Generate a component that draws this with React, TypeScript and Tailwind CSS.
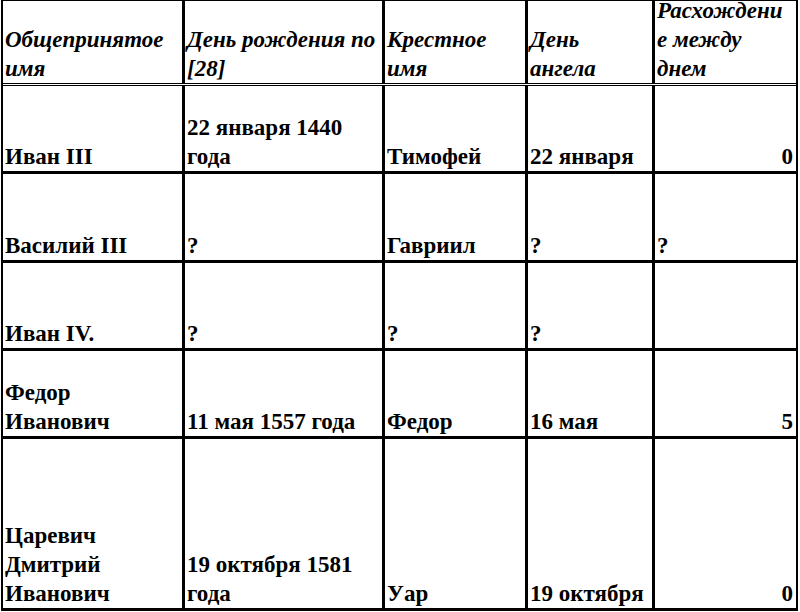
import React from "react";

type Cell = { lines: string[]; align?: "left" | "right" };

const header: string[][] = [
  ["Общепринятое", "имя"],
  ["День рождения по", "[28]"],
  ["Крестное", "имя"],
  ["День", "ангела"],
  ["Расхождени", "е между", "днем"],
];

const rows: { height: string; cells: Cell[] }[] = [
  {
    height: "h-[88px]",
    cells: [
      { lines: ["Иван III"] },
      { lines: ["22 января 1440", "года"] },
      { lines: ["Тимофей"] },
      { lines: ["22 января"] },
      { lines: ["0"], align: "right" },
    ],
  },
  {
    height: "h-[89px]",
    cells: [
      { lines: ["Василий III"] },
      { lines: ["?"] },
      { lines: ["Гавриил"] },
      { lines: ["?"] },
      { lines: ["?"] },
    ],
  },
  {
    height: "h-[88px]",
    cells: [
      { lines: ["Иван IV."] },
      { lines: ["?"] },
      { lines: ["?"] },
      { lines: ["?"] },
      { lines: [] },
    ],
  },
  {
    height: "h-[88px]",
    cells: [
      { lines: ["Федор", "Иванович"] },
      { lines: ["11 мая 1557 года"] },
      { lines: ["Федор"] },
      { lines: ["16 мая"] },
      { lines: ["5"], align: "right" },
    ],
  },
  {
    height: "h-[172px]",
    cells: [
      { lines: ["Царевич", "Дмитрий", "Иванович"] },
      { lines: ["19 октября 1581", "года"] },
      { lines: ["Уар"] },
      { lines: ["19 октября"] },
      { lines: ["0"], align: "right" },
    ],
  },
];

function Lines({ lines }: { lines: string[] }) {
  return (
    <>
      {lines.map((l, i) => (
        <span key={i} className="block whitespace-nowrap">
          {l}
        </span>
      ))}
    </>
  );
}

export default function App() {
  return (
    <div className="h-[612px] w-[800px] overflow-hidden bg-white pl-[1px] font-['Liberation_Serif',serif] text-[23px] leading-[29px] font-bold text-black">
      <div className="w-[797px] border-t border-r-2 border-l-2 border-black">
        {/* header */}
        <div className="grid h-[85px] grid-cols-[182px_200px_143px_127px_141px] border-b-[3px] border-double border-black italic">
          {header.map((lines, i) => (
            <div
              key={i}
              className={`flex flex-col justify-end overflow-hidden pl-[2px] ${
                i < 4 ? "border-r-[3px] border-black" : ""
              }`}
            >
              <Lines lines={lines} />
            </div>
          ))}
        </div>
        {rows.map((row, r) => (
          <div
            key={r}
            className={`grid grid-cols-[182px_200px_143px_127px_141px] border-b-[3px] border-black ${row.height}`}
          >
            {row.cells.map((c, i) => (
              <div
                key={i}
                className={`flex flex-col justify-end overflow-hidden ${
                  c.align === "right" ? "items-end pr-[3px]" : "pl-[2px]"
                } ${i < 4 ? "border-r-[3px] border-black" : ""}`}
              >
                <Lines lines={c.lines} />
              </div>
            ))}
          </div>
        ))}
      </div>
    </div>
  );
}
